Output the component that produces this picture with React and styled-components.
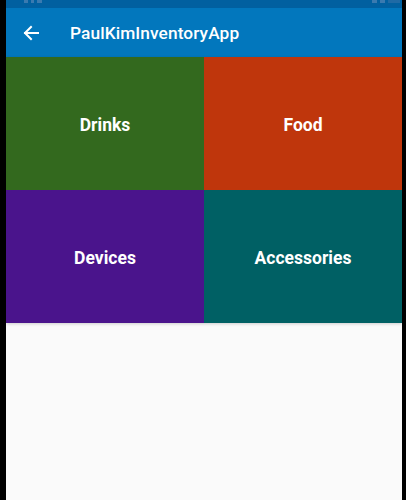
import React from "react";
import styled, { createGlobalStyle } from "styled-components";

const Global = createGlobalStyle`
  html, body { margin: 0; padding: 0; background: #000; height: 100%; }
  #root { height: 100%; }
  * { box-sizing: border-box; }
`;

const Frame = styled.div`
  display: flex;
  flex-direction: column;
  margin: 0 4px 0 6px;
  height: 500px;
  background: #fafafa;
  font-family: Roboto, "Noto Sans", sans-serif;
  overflow: hidden;
`;

const StatusBar = styled.div`
  height: 8px;
  background: #0160a0;
  display: flex;
  justify-content: space-between;
  align-items: flex-start;
  padding: 0 2px 0 18px;
`;

const StatusMarks = styled.div`
  display: flex;
  gap: 3px;
  height: 3px;
`;

const Mark = styled.span`
  display: block;
  width: ${(p) => p.$w}px;
  height: 3px;
  background: ${(p) => p.$c || "#3a7ab0"};
`;

const AppBar = styled.header`
  height: 49px;
  background: #0277bd;
  display: flex;
  align-items: center;
  color: #fff;
`;

const BackButton = styled.div`
  width: 64px;
  padding-left: 17px;
  display: flex;
  align-items: center;
`;

const Title = styled.h1`
  margin: 0;
  font-size: 17.3px;
  font-weight: 500;
  letter-spacing: 0.1px;
  color: #fff;
`;

const Grid = styled.div`
  display: grid;
  grid-template-columns: 198px 198px;
  grid-auto-rows: 133px;
  box-shadow: 0 1px 3px rgba(0, 0, 0, 0.18);
`;

const Tile = styled.div`
  background: ${(p) => p.$bg};
  display: flex;
  align-items: center;
  justify-content: center;
  padding-top: 2px;
  color: #fff;
  font-size: 17.5px;
  font-weight: 700;
`;

const tiles = [
  { label: "Drinks", bg: "#33691e" },
  { label: "Food", bg: "#bf360c" },
  { label: "Devices", bg: "#4a148c" },
  { label: "Accessories", bg: "#006064" },
];

export default function App() {
  return (
    <>
      <Global />
      <Frame>
        <StatusBar>
          <StatusMarks>
            <Mark $w={4} />
            <Mark $w={3} />
            <Mark $w={5} />
          </StatusMarks>
          <StatusMarks>
            <Mark $w={5} />
            <Mark $w={5} />
            <Mark $w={12} $c="#1f6aa5" />
          </StatusMarks>
        </StatusBar>
        <AppBar>
          <BackButton>
            <svg width="16" height="16" viewBox="0 0 16 16" fill="none">
              <path
                d="M15 8H2M8 2L2 8l6 6"
                stroke="#fff"
                strokeWidth="2"
                strokeLinecap="square"
              />
            </svg>
          </BackButton>
          <Title>PaulKimInventoryApp</Title>
        </AppBar>
        <Grid>
          {tiles.map((t) => (
            <Tile key={t.label} $bg={t.bg}>
              {t.label}
            </Tile>
          ))}
        </Grid>
      </Frame>
    </>
  );
}
